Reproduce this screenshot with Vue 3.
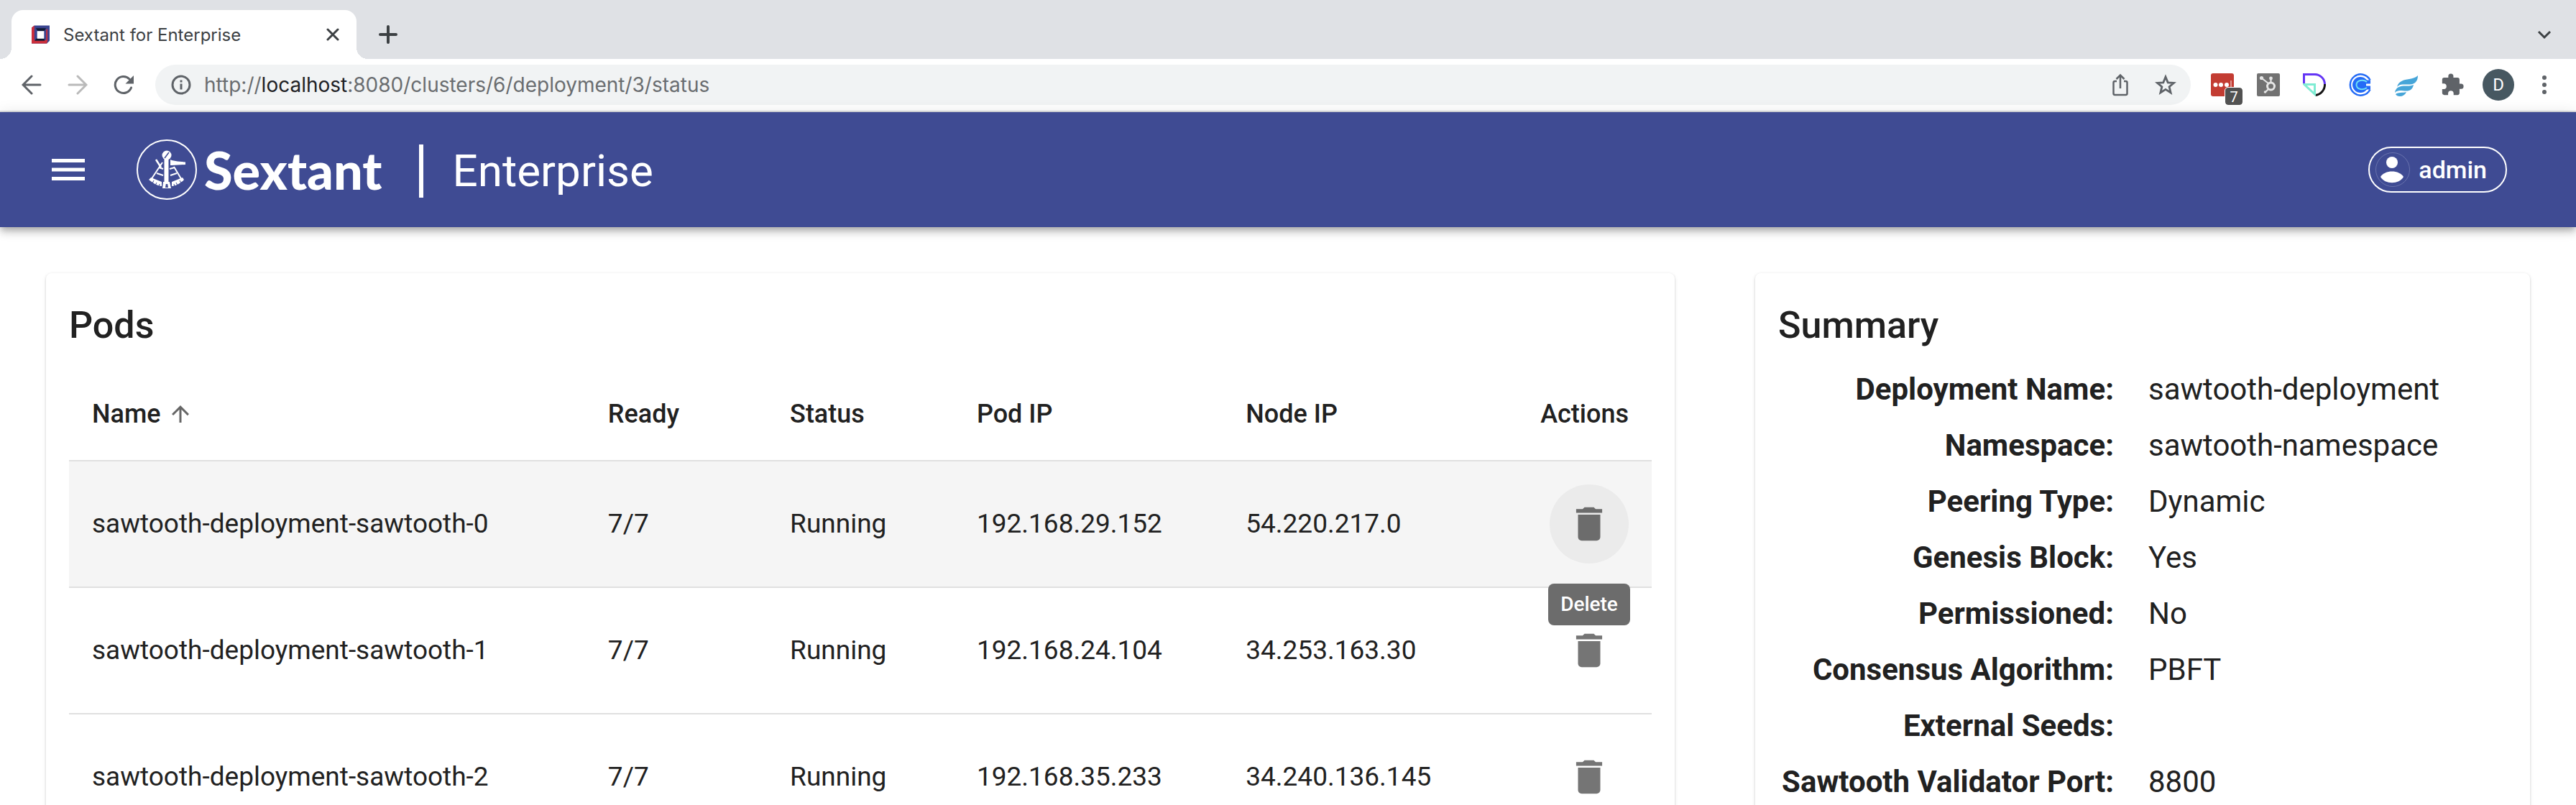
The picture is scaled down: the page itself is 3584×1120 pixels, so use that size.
<script setup>
import { ref } from 'vue'

const url = ref({ scheme: 'http://', host: 'localhost', rest: ':8080/clusters/6/deployment/3/status' })

const pods = [
  { name: 'sawtooth-deployment-sawtooth-0', ready: '7/7', status: 'Running', podIp: '192.168.29.152', nodeIp: '54.220.217.0', active: true },
  { name: 'sawtooth-deployment-sawtooth-1', ready: '7/7', status: 'Running', podIp: '192.168.24.104', nodeIp: '34.253.163.30' },
  { name: 'sawtooth-deployment-sawtooth-2', ready: '7/7', status: 'Running', podIp: '192.168.35.233', nodeIp: '34.240.136.145' },
]

const summary = [
  ['Deployment Name:', 'sawtooth-deployment'],
  ['Namespace:', 'sawtooth-namespace'],
  ['Peering Type:', 'Dynamic'],
  ['Genesis Block:', 'Yes'],
  ['Permissioned:', 'No'],
  ['Consensus Algorithm:', 'PBFT'],
  ['External Seeds:', ''],
  ['Sawtooth Validator Port:', '8800'],
]
</script>

<template>
  <div class="window">
    <div class="tabstrip">
      <div class="tab">
        <svg class="favicon" viewBox="0 0 26 26">
          <path d="M4 0h22v22l-4 4H0V3z" fill="#3a4590" />
          <path d="M0 3l4-3v21h17v-15l2-1v17l-1 4H0z" fill="#cc2f3c" />
          <path d="M6 4h15l-3 4H9z M4 22l4-4h10l1 4z" fill="#101a33" />
          <path d="M8 8h10v11H8z" fill="#fff" />
        </svg>
        <span class="tab-title">Sextant for Enterprise</span>
        <button class="icon-btn tab-close" aria-label="Close tab">
          <svg width="18" height="18" viewBox="0 0 18 18"><path d="M2 2l14 14M16 2L2 16" stroke="#3c4043" stroke-width="3" stroke-linecap="round" /></svg>
        </button>
      </div>
      <button class="icon-btn" aria-label="New tab">
        <svg width="26" height="26" viewBox="0 0 26 26"><path d="M13 2v22M2 13h22" stroke="#3c4043" stroke-width="4" stroke-linecap="round" /></svg>
      </button>
      <button class="icon-btn tab-search" aria-label="Search tabs">
        <svg width="20" height="14" viewBox="0 0 20 14"><path d="M2 3l8 8 8-8" fill="none" stroke="#3c4043" stroke-width="3" /></svg>
      </button>
    </div>

    <div class="toolbar">
      <div class="nav">
        <button class="icon-btn" aria-label="Back">
          <svg width="28" height="28" viewBox="0 0 28 28"><path d="M26 14H3M14 2L2 14l12 12" fill="none" stroke="#5f6368" stroke-width="3" stroke-linecap="round" /></svg>
        </button>
        <button class="icon-btn" aria-label="Forward">
          <svg width="28" height="28" viewBox="0 0 28 28"><path d="M2 14h23M14 2l12 12-12 12" fill="none" stroke="#bababa" stroke-width="3" stroke-linecap="round" /></svg>
        </button>
        <button class="icon-btn" aria-label="Reload">
          <svg width="28" height="28" viewBox="0 0 28 28"><path d="M24.500 18A11.500 11.500 0 1 1 22 6" fill="none" stroke="#5f6368" stroke-width="3" stroke-linecap="round" /><path d="M28 1v11.500H16.500z" fill="#5f6368" /></svg>
        </button>
      </div>
      <div class="omnibox">
        <svg width="28" height="28" viewBox="0 0 28 28"><circle cx="14" cy="14" r="12" fill="none" stroke="#5f6368" stroke-width="3" /><path d="M14 12.500v8M14 7.500v3" stroke="#5f6368" stroke-width="3" /></svg>
        <div class="url"><span>{{ url.scheme }}</span><b>{{ url.host }}</b><span>{{ url.rest }}</span></div>
        <button class="icon-btn" aria-label="Share">
          <svg width="28" height="32" viewBox="0 0 28 32"><path d="M9 11H6.500a2 2 0 0 0-2 2v15a2 2 0 0 0 2 2h15a2 2 0 0 0 2-2V13a2 2 0 0 0-2-2H19M14 21V3M8.500 8L14 2.500 19.500 8" fill="none" stroke="#5f6368" stroke-width="2.500" /></svg>
        </button>
        <button class="icon-btn" aria-label="Bookmark">
          <svg width="30" height="30" viewBox="0 0 30 30"><path d="M15 4l3.200 7.800 8.300.6-6.400 5.300 2 8.200-7.100-4.500-7.100 4.500 2-8.200-6.400-5.300 8.300-.6z" fill="none" stroke="#5f6368" stroke-width="2.800" /></svg>
        </button>
      </div>
      <div class="extensions">
        <button class="icon-btn ext" aria-label="Password manager">
          <svg width="32" height="32" viewBox="0 0 32 32"><rect width="32" height="32" rx="3" fill="#c33c32" /><circle cx="6.500" cy="16" r="3" fill="#fff" /><circle cx="14" cy="16" r="3" fill="#fff" /><circle cx="22" cy="16" r="3" fill="#fff" /><path d="M28 10v12" stroke="#e9b4b0" stroke-width="1.500" /></svg>
          <span class="badge">7</span>
        </button>
        <button class="icon-btn ext" aria-label="CRM">
          <svg width="32" height="32" viewBox="0 0 32 32"><rect width="32" height="32" rx="2" fill="#727272" /><g fill="none" stroke="#e6e6e6"><circle cx="19.500" cy="18" r="5" stroke-width="3" /><path d="M19.500 13V7M16 14L6.500 6.500M16 22l-4 4" stroke-width="2.200" /></g><g fill="#e6e6e6"><circle cx="6.500" cy="6.500" r="2.600" /><circle cx="19.500" cy="7" r="2.400" /><circle cx="11.500" cy="26" r="1.800" /></g></svg>
        </button>
        <button class="icon-btn ext" aria-label="Docs">
          <svg width="32" height="32" viewBox="0 0 32 32" fill="none" stroke-width="3"><path d="M1.500 14V1.500H16A14 14 0 0 1 30.500 15" stroke="#6435f5" /><path d="M30.500 15A15 15 0 0 1 17 30.500" stroke="#151515" /><path d="M2 15.500h14.500V29z" stroke="#7fecd3" /></svg>
        </button>
        <button class="icon-btn ext" aria-label="Calendar">
          <svg width="32" height="32" viewBox="0 0 32 32" fill="none"><path d="M29.500 9.500A14.600 14.600 0 1 0 29.500 22.500" stroke="#256cf6" stroke-width="2.500" /><circle cx="16" cy="16" r="11" fill="#256cf6" /><path d="M24 11l8-1v12l-8-1z" fill="#fff" /><path d="M30 12h-5.500C20 8 10.500 9.500 10.500 16s9.500 8 14 4H30" stroke="#256cf6" stroke-width="5" /><path d="M25 12C20 8 10.500 9.500 10.500 16s9.500 8 14.500 4" stroke="#6fe0f5" stroke-width="2" /></svg>
        </button>
        <button class="icon-btn ext" aria-label="Wing">
          <svg width="32" height="32" viewBox="0 0 32 32" fill="#46a5d8"><path d="M32 3c0 8-4 12-11 12.500C14 16 7 14 3 19 5 11 12 9 20 8c5-.8 9-2 12-5z" /><path d="M26 16c-1 6-5 8.500-10 8.500-6 0-12-2.500-16 2.500 1-7 6-9 12-9.500 6-.3 10 .5 14-1.500z" /><path d="M16 26c-2 4-5 6-9 6-3 0-5-1-6-3 4-3 9-1.500 15-3z" /></svg>
        </button>
        <button class="icon-btn ext" aria-label="Extensions">
          <svg width="34" height="34" viewBox="0 0 24 24"><path d="M20.500 11H19V7a2 2 0 0 0-2-2h-4V3.500a2.500 2.500 0 0 0-5 0V5H4a2 2 0 0 0-2 2v3.800h1.500a2.700 2.700 0 0 1 0 5.400H2V20c0 1.100.9 2 2 2h3.800v-1.500a2.700 2.700 0 0 1 5.400 0V22H17a2 2 0 0 0 2-2v-4h1.500a2.500 2.500 0 0 0 0-5z" fill="#5f6368" /></svg>
        </button>
        <button class="avatar" aria-label="Profile">D</button>
        <button class="icon-btn menu-dots" aria-label="Menu">
          <svg width="8" height="28" viewBox="0 0 8 28" fill="#5f6368"><circle cx="4" cy="4" r="3" /><circle cx="4" cy="14" r="3" /><circle cx="4" cy="24" r="3" /></svg>
        </button>
      </div>
    </div>

    <header class="appbar">
      <button class="icon-btn burger" aria-label="Open menu">
        <svg width="46" height="30" viewBox="0 0 46 30" fill="#fff"><path d="M0 0h46v5H0zM0 12.500h46v5H0zM0 25h46v5H0z" /></svg>
      </button>
      <svg class="logo" width="84" height="84" viewBox="0 0 84 84">
        <circle cx="42" cy="42" r="41" fill="none" stroke="#fff" stroke-width="2" />
        <circle cx="42" cy="22" r="6.500" fill="#fff" />
        <path d="M39 26l6-8" stroke="#3f4b93" stroke-width="1.500" />
        <path d="M38.500 27h6v32h-6z" fill="#fff" />
        <path d="M47 28l2 1 8 1.500 11 1v3.500l-11 .5-8 .5h-2z" fill="#fff" />
        <g fill="none" stroke="#fff" stroke-width="2">
          <path d="M27 28l7 11" stroke-width="2.500" />
          <path d="M36 32L20 56M52 38l12 20" />
          <path d="M31 39l6 2M46 41l7-2M28 47l9 3M47 50l9-3" />
        </g>
        <path d="M20 53l15 6v6c-6-.5-12-4-18-9zM64 53l-15 6v6c6-.5 12-4 17-9z" fill="#fff" />
        <path d="M22 61l2-4M26 64l2-4M31 66l1-4M62 61l-2-4M57 64l-2-4M53 66l-1-4" stroke="#3f4b93" stroke-width="1" />
        <path d="M37 59h9l2 9H36z" fill="#fff" />
        <path d="M40 67l.8-5h2.400l.8 5z" fill="#3f4b93" />
      </svg>
      <span class="brand">Sextant</span>
      <span class="divider"></span>
      <span class="edition">Enterprise</span>
      <button class="user">
        <svg width="48" height="48" viewBox="0 0 48 48"><circle cx="24" cy="24" r="23.500" fill="none" stroke="#7a83b8" stroke-width="1" stroke-opacity=".7" /><circle cx="23" cy="14" r="8" fill="#fff" /><path d="M7 34c6-10 26-10 32 0-6 11-26 11-32 0z" fill="#fff" /></svg>
        <span>admin</span>
      </button>
    </header>

    <main class="content">
      <section class="card">
        <h2>Pods</h2>
        <table>
          <colgroup>
            <col class="c-name"><col class="c-ready"><col class="c-status"><col class="c-ip"><col class="c-ip"><col class="c-actions">
          </colgroup>
          <thead>
            <tr>
              <th>
                <span class="sort">Name
                  <svg width="36" height="36" viewBox="0 0 24 24"><path d="M4 12l1.410 1.410L11 7.830V20h2V7.830l5.580 5.590L20 12l-8-8z" fill="#666" /></svg>
                </span>
              </th>
              <th>Ready</th>
              <th>Status</th>
              <th>Pod IP</th>
              <th>Node IP</th>
              <th class="right">Actions</th>
            </tr>
          </thead>
          <tbody>
            <tr v-for="pod in pods" :key="pod.name" :class="{ active: pod.active }">
              <td>{{ pod.name }}</td>
              <td>{{ pod.ready }}</td>
              <td>{{ pod.status }}</td>
              <td>{{ pod.podIp }}</td>
              <td>{{ pod.nodeIp }}</td>
              <td class="right">
                <div class="action">
                  <button class="delete" aria-label="Delete">
                    <svg width="62" height="62" viewBox="0 0 24 24"><path d="M6 19c0 1.100.9 2 2 2h8c1.100 0 2-.9 2-2V7H6v12zM19 4h-3.500l-1-1h-5l-1 1H5v2h14V4z" /></svg>
                  </button>
                  <span v-if="pod.active" class="tooltip" role="tooltip">Delete</span>
                </div>
              </td>
            </tr>
          </tbody>
        </table>
      </section>

      <section class="card">
        <h2>Summary</h2>
        <dl>
          <template v-for="[label, value] in summary" :key="label">
            <dt>{{ label }}</dt>
            <dd>{{ value }}</dd>
          </template>
        </dl>
      </section>
    </main>
  </div>
</template>

<style>
body {
  margin: 0;
  background: #fff;
}
</style>

<style scoped>
* {
  box-sizing: border-box;
}

.window {
  display: flex;
  flex-direction: column;
  height: 100vh;
  overflow: hidden;
  font-family: Roboto, "Liberation Sans", sans-serif;
  color: #212121;
}

button {
  font-family: inherit;
  cursor: pointer;
}

svg {
  display: block;
  flex: none;
}

.icon-btn {
  display: flex;
  align-items: center;
  justify-content: center;
  padding: 0;
  border: 0;
  background: none;
}

/* Browser tab strip */
.tabstrip {
  display: flex;
  flex: none;
  align-items: center;
  height: 82px;
  padding: 14px 34px 0 16px;
  background: #dfe1e5;
}

.tab {
  position: relative;
  display: flex;
  align-items: center;
  align-self: stretch;
  width: 480px;
  margin-right: 31px;
  padding: 0 24px 0 28px;
  border-radius: 16px 16px 0 0;
  background: #fff;
}

.tab::before,
.tab::after {
  content: "";
  position: absolute;
  bottom: 0;
  width: 16px;
  height: 16px;
}

.tab::before {
  right: 100%;
  background: radial-gradient(circle at 0 0, #dfe1e5 16px, #fff 16px);
}

.tab::after {
  left: 100%;
  background: radial-gradient(circle at 100% 0, #dfe1e5 16px, #fff 16px);
}

.favicon {
  width: 25px;
  height: 26px;
}

.tab-title {
  margin-left: 19px;
  font-family: Inter, sans-serif;
  font-size: 24px;
  color: #3c4043;
}

.tab-close {
  margin-left: auto;
}

.tab-search {
  margin-left: auto;
}

/* Browser toolbar */
.toolbar {
  display: flex;
  flex: none;
  align-items: center;
  height: 74px;
  padding: 0 40px 0 30px;
  border-bottom: 2px solid #dadce0;
  background: #fff;
}

.nav {
  display: flex;
  gap: 36px;
  margin-right: 30px;
}

.omnibox {
  display: flex;
  flex: 1;
  align-items: center;
  height: 56px;
  padding: 0 20px 0 22px;
  border-radius: 28px;
  background: #f1f3f4;
}

.omnibox .icon-btn + .icon-btn {
  margin-left: 34px;
}

.url {
  flex: 1;
  margin-left: 18px;
  font-family: Inter, sans-serif;
  font-size: 28px;
  color: #6a6d70;
}

.url b {
  font-weight: 400;
  color: #202124;
}

.extensions {
  display: flex;
  align-items: center;
  margin-left: 28px;
}

.ext {
  position: relative;
  width: 32px;
  height: 32px;
  margin-right: 32px;
}

.badge {
  position: absolute;
  top: 20px;
  left: 20px;
  width: 24px;
  height: 24px;
  border-radius: 4px;
  outline: 1px solid #fff;
  background: #515151;
  color: #fff;
  font-size: 20px;
  line-height: 26px;
}

.avatar {
  width: 44px;
  height: 44px;
  margin-left: -6px;
  padding: 0;
  border: 0;
  border-radius: 50%;
  background: #475861;
  color: #fff;
  font-size: 24px;
}

.menu-dots {
  margin-left: 38px;
}

/* Application bar */
.appbar {
  display: flex;
  flex: none;
  align-items: center;
  height: 160px;
  padding: 0 96px 0 72px;
  background: #3f4b93;
  color: #fff;
  box-shadow: 0 4px 8px -2px rgba(0, 0, 0, 0.2), 0 8px 10px rgba(0, 0, 0, 0.14), 0 2px 20px rgba(0, 0, 0, 0.12);
}

.logo {
  margin-left: 72px;
}

.brand {
  margin-left: 10px;
  font-family: Lato, sans-serif;
  font-size: 72px;
  font-weight: 900;
  line-height: 80px;
}

.divider {
  width: 6px;
  height: 74px;
  margin: 4px 40px 0 52px;
  background: #fff;
}

.edition {
  padding-top: 4px;
  font-size: 62px;
  line-height: 80px;
}

.user {
  display: flex;
  align-items: center;
  gap: 12px;
  height: 64px;
  margin-left: auto;
  padding: 0 26px 0 8px;
  border: 2px solid #fff;
  border-radius: 32px;
  background: none;
  color: #fff;
  font-size: 34px;
  font-weight: 500;
}

/* Page */
.content {
  display: grid;
  grid-template-columns: minmax(0, 2266fr) minmax(0, 1078fr);
  gap: 112px;
  flex: 1;
  padding: 64px 64px 0;
}

.card {
  padding: 32px;
  border-radius: 8px;
  background: #fff;
  box-shadow: 0 2px 2px -1px rgba(0, 0, 0, 0.2), 0 1px 3px rgba(0, 0, 0, 0.14), 0 2px 6px rgba(0, 0, 0, 0.08);
}

h2 {
  margin: 0;
  font-size: 52px;
  font-weight: 500;
  line-height: 82px;
}

table {
  width: 100%;
  margin-top: 18px;
  border-collapse: separate;
  border-spacing: 0;
  table-layout: fixed;
}

.c-name { width: 32.6%; }
.c-ready { width: 11.5%; }
.c-status { width: 11.8%; }
.c-ip { width: 17%; }
.c-actions { width: 10.1%; }

th,
td {
  padding: 32px;
  border-bottom: 2px solid #e0e0e0;
  text-align: left;
  line-height: 48px;
  white-space: nowrap;
}

th {
  height: 130px;
  font-size: 36px;
  font-weight: 500;
}

td {
  height: 176px;
  font-size: 37px;
}

th.right,
td.right {
  padding-left: 0;
  text-align: right;
}

.active td {
  background: #f5f5f5;
}

.sort {
  display: inline-flex;
  align-items: center;
  gap: 9px;
}

.action {
  position: relative;
  display: flex;
  justify-content: flex-end;
}

.delete {
  width: 110px;
  height: 110px;
  padding: 24px;
  border: 0;
  border-radius: 50%;
  background: transparent;
}

.delete svg {
  fill: #757575;
}

.active .delete {
  background: #ebebeb;
}

.active .delete svg {
  fill: #6c6c6c;
}

.tooltip {
  position: absolute;
  top: 138px;
  right: -2px;
  z-index: 1;
  width: 114px;
  border-radius: 8px;
  background: #6c6c6c;
  color: #fff;
  font-size: 28px;
  font-weight: 500;
  line-height: 58px;
  text-align: center;
}

dl {
  display: grid;
  grid-template-columns: 467fr 499fr;
  column-gap: 48px;
  margin: 9px 0 0;
  font-size: 42px;
  line-height: 78px;
}

dt {
  font-weight: 700;
  text-align: right;
  white-space: nowrap;
}

dd {
  margin: 0;
}
</style>
